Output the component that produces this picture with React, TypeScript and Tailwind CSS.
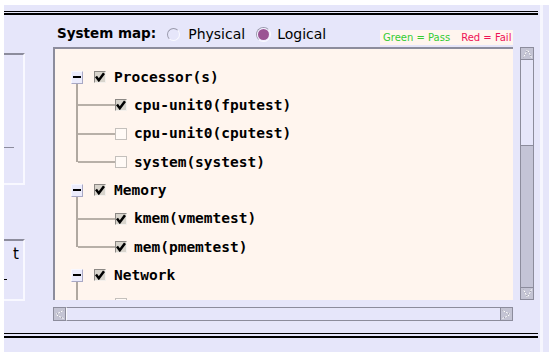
import React from 'react';

type Node = { label: string; checked: boolean; children?: Node[] };

const tree: Node[] = [
  {
    label: 'Processor(s)',
    checked: true,
    children: [
      { label: 'cpu-unit0(fputest)', checked: true },
      { label: 'cpu-unit0(cputest)', checked: false },
      { label: 'system(systest)', checked: false },
    ],
  },
  {
    label: 'Memory',
    checked: true,
    children: [
      { label: 'kmem(vmemtest)', checked: true },
      { label: 'mem(pmemtest)', checked: true },
    ],
  },
  {
    label: 'Network',
    checked: true,
    // next row is scrolled out of view, only its box edge shows
    children: [{ label: '', checked: false }],
  },
];

const sans = "font-['DejaVu_Sans',sans-serif]";
const mono = "font-['DejaVu_Sans_Mono',monospace]";

function CheckBox({ checked }: { checked: boolean }) {
  if (!checked) {
    return <div className="w-[12px] h-[12px] shrink-0 border border-[#c4c0bc] bg-[#fffaf6]" />;
  }
  return (
    <div className="w-[12px] h-[12px] shrink-0 border border-t-[#8c8884] border-l-[#8c8884] border-r-[#f4f0ec] border-b-[#f4f0ec] bg-[#d8d4cc] flex items-center justify-center">
      <svg width="10" height="10" viewBox="0 0 10 10">
        <path d="M1 4.6 L3.8 8.2 L9 1.2" fill="none" stroke="#000" strokeWidth="2.5" />
      </svg>
    </div>
  );
}

function MinusBox() {
  return (
    <div className="w-[12px] h-[13px] shrink-0 border border-t-[#f8f8ff] border-l-[#f8f8ff] border-r-[#a8a8c4] border-b-[#a8a8c4] bg-[#ececfc] flex items-center justify-center">
      <div className="w-[8px] h-[2px] bg-black" />
    </div>
  );
}

function ParentRow({ node }: { node: Node }) {
  return (
    <div className="flex items-center h-[28.3px] pl-[16px]">
      <div className="flex flex-col items-center w-[12px] h-full">
        <div className="flex-1" />
        <MinusBox />
        <div className="flex-1 w-[2px] bg-[#b0a8a0]" />
      </div>
      <div className="ml-[11px]">
        <CheckBox checked={node.checked} />
      </div>
      <span className={`ml-[8px] ${mono} font-bold text-[14.5px] text-black leading-none`}>{node.label}</span>
    </div>
  );
}

function ChildRow({ node, last }: { node: Node; last: boolean }) {
  return (
    <div className="flex h-[28.3px] pl-[21px]">
      <div className="flex flex-col w-[2px]">
        <div className="flex-1 bg-[#b0a8a0]" />
        <div className={`flex-1 ${last ? '' : 'bg-[#b0a8a0]'}`} />
      </div>
      <div className="w-[37px] flex items-center">
        <div className="w-full h-[2px] bg-[#b8b0a8]" />
      </div>
      <div className="flex items-center">
        <CheckBox checked={node.checked} />
        {node.label && (
          <span className={`ml-[7px] ${mono} font-bold text-[14.5px] text-black leading-none`}>{node.label}</span>
        )}
      </div>
    </div>
  );
}

function Arrow({ dir }: { dir: 'up' | 'down' | 'left' | 'right' }) {
  const pts = {
    up: 'M1.5 9.5 L5.5 1.5 L9.5 9.5',
    down: 'M1.5 1.5 L5.5 9.5 L9.5 1.5',
    left: 'M9.5 1.5 L1.5 5.5 L9.5 9.5',
    right: 'M1.5 1.5 L9.5 5.5 L1.5 9.5',
  }[dir];
  return (
    <svg width="11" height="11" viewBox="0 0 11 11">
      <path d={pts} fill="none" stroke="#ffffff" strokeWidth="1" />
      <path d={pts} fill="none" stroke="#8c8c9c" strokeWidth="1" strokeDasharray="1 2" />
    </svg>
  );
}

export default function App() {
  return (
    <div className={`w-[549px] h-[352px] bg-white pl-[4px] pt-[5px] flex overflow-hidden ${sans}`}>
      <div className="w-[536px] h-[347px] bg-[#e6e6fa] flex flex-col">
        {/* top rule */}
        <div className="mt-[6px] w-[534px] h-px bg-black" />
        <div className="mt-[1px] w-[534px] h-[2px] bg-black" />

        <div className="flex h-[306px]">
          {/* left column, cut off */}
          <div className="w-[21px] flex flex-col">
            <div className="mt-[38px] h-[132px] border-t-2 border-t-[#8c8c9c] border-r-2 border-r-[#f8f8ff] border-b-2 border-b-[#f8f8ff]">
              <div className="mt-[92px] w-[10px] h-px bg-[#8c8c9c]" />
            </div>
            <div className="mt-[54px] h-[62px] border-t-2 border-t-[#8c8c9c] border-r-2 border-r-[#f8f8ff] border-b-2 border-b-[#f8f8ff] flex flex-col">
              <span className="mt-[6px] ml-[9px] text-[15px] leading-none text-black">t</span>
              <div className="mt-[17px] w-[3px] h-px bg-black" />
            </div>
          </div>

          {/* system map */}
          <div className="ml-[28px] flex flex-col">
            <div className="h-[32px] w-[460px] flex items-center pt-[6px]">
              <span className="ml-[4px] font-bold text-[13.5px] leading-none text-black">System map:</span>
              <div className="ml-[11px] w-[13px] h-[13px] rounded-full border border-t-[#9a9aac] border-l-[#9a9aac] border-r-[#fafaff] border-b-[#fafaff] bg-[#e6e6fa]" />
              <span className="ml-[8px] text-[14px] leading-none text-black">Physical</span>
              <div className="ml-[11px] w-[15px] h-[15px] rounded-full border border-t-[#9a9aac] border-l-[#9a9aac] border-r-[#fafaff] border-b-[#fafaff] flex items-center justify-center">
                <div className="w-[11px] h-[11px] rounded-full bg-[#9b5594] ring-1 ring-[#f4f0ff]" />
              </div>
              <span className="ml-[6px] text-[14px] leading-none text-black">Logical</span>
              <div className="ml-auto self-end mb-[2px] h-[15px] w-[133px] bg-[#fff5ee] flex items-center pl-[3px] text-[10px] leading-none">
                <span className="text-[#33cc33]">Green = Pass</span>
                <span className="ml-[11px] text-[#ee1155]">Red = Fail</span>
              </div>
            </div>

            <div className="flex">
              <div className="w-[460px] h-[253px] bg-[#fff5ee] border-t-2 border-l-2 border-[#8c8c9c] overflow-hidden pt-[14px]">
                {tree.map((n) => (
                  <div key={n.label}>
                    <ParentRow node={n} />
                    {n.children?.map((c, i) => (
                      <ChildRow key={c.label + i} node={c} last={i === (n.children?.length ?? 0) - 1} />
                    ))}
                  </div>
                ))}
              </div>

              {/* vertical scrollbar */}
              <div className="ml-[7px] w-[14px] h-[253px] flex flex-col">
                <div className="h-[13px] bg-[#c4c4d4] border border-[#8c8c9c] flex items-center justify-center">
                  <Arrow dir="up" />
                </div>
                <div className="h-[86px] bg-[#e6e6fa] border-x border-b border-[#8c8c9c]" />
                <div className="flex-1 bg-[#c4c4d6] border-x border-[#8c8c9c]" />
                <div className="h-[13px] bg-[#c4c4d4] border border-[#8c8c9c] flex items-center justify-center">
                  <Arrow dir="down" />
                </div>
              </div>
            </div>

            {/* horizontal scrollbar */}
            <div className="mt-[7px] w-[460px] h-[14px] flex">
              <div className="w-[13px] bg-[#c4c4d4] border border-[#8c8c9c] flex items-center justify-center">
                <Arrow dir="left" />
              </div>
              <div className="flex-1 bg-[#e6e6fa] border-y border-[#8c8c9c] border-l border-l-[#fafaff]" />
              <div className="w-[13px] bg-[#c4c4d4] border border-[#8c8c9c] flex items-center justify-center">
                <Arrow dir="right" />
              </div>
            </div>
          </div>
        </div>

        {/* bottom rule */}
        <div className="mt-[12px] w-[534px] h-px bg-black" />
        <div className="mt-[2px] w-[534px] h-[2px] bg-black" />
      </div>
      <div className="w-[3px] h-[347px] bg-[#f6f6fe]" />
      <div className="w-[6px] h-[347px] bg-[#e6e6fa]" />
    </div>
  );
}
